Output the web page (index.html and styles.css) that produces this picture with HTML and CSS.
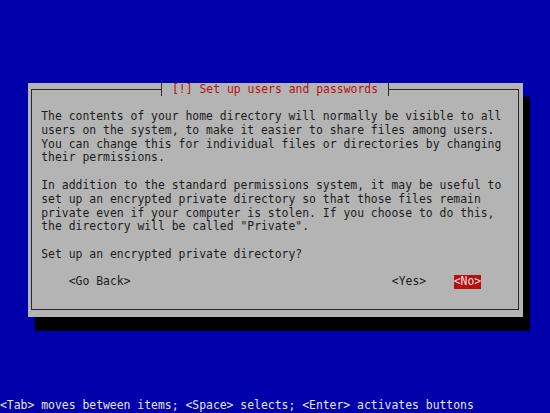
FILE: index.html
```html
<!DOCTYPE html>
<html lang="en">
<head>
  <meta charset="UTF-8">
  <meta name="viewport" content="width=device-width, initial-scale=1.0">
  <title>Set up users and passwords</title>
  <link rel="stylesheet" href="styles.css">
</head>
<body>
  <div class="screen">
    <div class="stage">
      <!-- Dialog window -->
      <div class="dialog">
        <div class="frame">
          <div class="title-row">
            <span class="title">[!] Set up users and passwords</span>
          </div>
          <div class="content">
            <p class="para">The contents of your home directory will normally be visible to all
users on the system, to make it easier to share files among users.
You can change this for individual files or directories by changing
their permissions.</p>
            <p class="para">In addition to the standard permissions system, it may be useful to
set up an encrypted private directory so that those files remain
private even if your computer is stolen. If you choose to do this,
the directory will be called "Private".</p>
            <p class="para">Set up an encrypted private directory?</p>
            <div class="buttons">
              <span class="btn btn-back">&lt;Go Back&gt;</span>
              <span class="btn btn-yes">&lt;Yes&gt;</span>
              <span class="btn btn-no active">&lt;No&gt;</span>
            </div>
          </div>
        </div>
      </div>
    </div>

    <!-- Help line -->
    <div class="status">&lt;Tab&gt; moves between items; &lt;Space&gt; selects; &lt;Enter&gt; activates buttons</div>
  </div>
</body>
</html>
```
FILE: styles.css
```css
:root {
  --cw: 6.875px;
  --ch: 13.77px;
  --blue: #0000aa;
  --gray: #b4b4b4;
  --ink: #1c1c1c;
  --red: #b41010;
}

html, body {
  margin: 0;
  padding: 0;
  background-color: var(--blue);
}

body {
  font-family: "DejaVu Sans Mono", "Liberation Mono", monospace;
  font-size: 11.42px;
  line-height: var(--ch);
}

.screen {
  width: 550px;
  height: 413px;
  display: flex;
  flex-direction: column;
  overflow: hidden;
}

.stage {
  flex: 1;
  padding: calc(6 * var(--ch)) 0 0 calc(4 * var(--cw));
}

.dialog {
  width: calc(72 * var(--cw));
  height: calc(17 * var(--ch));
  box-sizing: border-box;
  padding: calc(0.5 * var(--ch)) calc(0.5 * var(--cw));
  background-color: var(--gray);
  box-shadow: var(--cw) var(--ch) 0 #000;
}

.frame {
  height: 100%;
  box-sizing: border-box;
  border: 1px solid #2a2a2a;
}

.title-row {
  display: flex;
  justify-content: center;
  height: var(--ch);
  margin-top: calc(-0.5 * var(--ch) - 1px);
}

.title {
  padding: 0 calc(1.5 * var(--cw) - 0.5px);
  border-left: 1px solid #2a2a2a;
  border-right: 1px solid #2a2a2a;
  background-color: var(--gray);
  color: var(--red);
}

.content {
  padding: var(--ch) 0 0 calc(1.5 * var(--cw) - 1px);
  color: var(--ink);
}

.para {
  margin: 0 0 var(--ch);
  white-space: pre;
}

.buttons {
  display: flex;
  padding-left: calc(4 * var(--cw));
}

.btn {
  display: inline-block;
  height: var(--ch);
  white-space: pre;
}

.btn-yes {
  margin-left: calc(38 * var(--cw));
}

.btn-no {
  margin-left: calc(4 * var(--cw));
}

.btn.active {
  background-color: var(--red);
  color: #f4dcdc;
}

.status {
  height: var(--ch);
  color: #e6e6e6;
  white-space: pre;
}
```
